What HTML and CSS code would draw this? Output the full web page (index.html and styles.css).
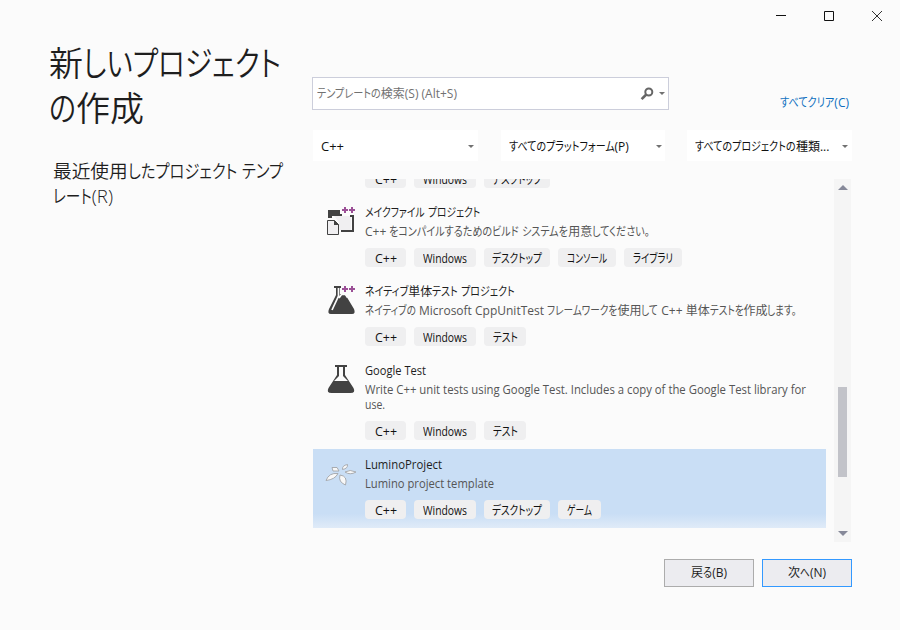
FILE: index.html
```html
<!DOCTYPE html>
<html lang="ja">
<head>
<meta charset="utf-8">
<title>新しいプロジェクトの作成</title>
<link rel="stylesheet" href="styles.css">
</head>
<body>
<div class="window">
  <header class="titlebar">
    <svg class="winctl" viewBox="0 0 48 32"><path d="M24 15.500h10"/></svg>
    <svg class="winctl" viewBox="0 0 48 32"><path d="M24.500 11.500h9v9h-9z"/></svg>
    <svg class="winctl close" viewBox="0 0 48 32"><path d="M24 11l10 10M34 11l-10 10"/></svg>
  </header>
  <div class="columns">
    <aside class="sidebar">
      <h1><span class="line"><span data-w="232">新しいプロジェクト</span></span><span class="line"><span data-w="95">の作成</span></span></h1>
      <h2><span class="line"><span data-w="230">最近使用したプロジェクト テンプ</span></span><span class="line"><span data-w="60">レート(R)</span></span></h2>
    </aside>
    <main class="main">
      <div class="searchrow">
        <div class="search"><span class="hint" data-w="140">テンプレートの検索(S) (Alt+S)</span>
          <svg class="lens" width="14" height="14" viewBox="0 0 14 14"><circle cx="8.800" cy="5" r="3.500"/><path d="M6.300 7.500L1.600 12.200"/></svg>
          <i class="caret"></i></div>
        <a class="clear"><span data-w="69">すべてクリア(C)</span></a>
      </div>
      <div class="filters">
        <div class="select"><span data-w="23">C++</span><i class="caret"></i></div>
        <div class="select"><span data-w="120">すべてのプラットフォーム(P)</span><i class="caret"></i></div>
        <div class="select"><span data-w="134">すべてのプロジェクトの種類...</span><i class="caret"></i></div>
      </div>
      <div class="listwrap">
        <div class="list">
          <div class="tags cut"><b class="t1"><span data-w="22">C++</span></b><b class="t2"><span data-w="44">Windows</span></b><b class="t3"><span data-w="50">デスクトップ</span></b></div>
          <section class="item">
            <svg class="icon" viewBox="0 0 32 32"><path fill="#f0eff1" d="M9 10h17v14H14V16z"/><path fill="#424242" d="M3 4h12v4h2v2H7v2H3zM25 9h4v17H16v-2h11V11h-2z"/><path fill="#f0eff1" stroke="#424242" d="M2.500 14.500h7l4 4v10h-11z"/><path fill="#424242" d="M9 14v5h5z"/><path stroke="#9b4f96" stroke-width="2" d="M17 4h6M20 1v6M24 4h6M27 1v6"/></svg>
            <div class="body"><h3><span data-w="115">メイクファイル プロジェクト</span></h3><p><span data-w="285">C++ をコンパイルするためのビルド システムを用意してください。</span></p>
            <div class="tags"><b class="t1"><span data-w="22">C++</span></b><b class="t2"><span data-w="44">Windows</span></b><b class="t3"><span data-w="50">デスクトップ</span></b><b class="t4"><span data-w="40">コンソール</span></b><b class="t4"><span data-w="40">ライブラリ</span></b></div></div>
          </section>
          <section class="item">
            <svg class="icon" viewBox="0 0 32 32"><path fill="#424242" d="M9 1h7v2h-1v6h5l9 15q2 5-2 5H6q-4 0-2-5l7-14V3H9z"/><path stroke="#fbfbfb" stroke-width="1.700" fill="none" d="M13.500 3v8L7 25M14 13l2.500-3.500h4l2 3"/><path stroke="#9b4f96" stroke-width="2" d="M17 4h6M20 1v6M24 4h6M27 1v6"/></svg>
            <div class="body"><h3><span data-w="150">ネイティブ単体テスト プロジェクト</span></h3><p><span data-w="432">ネイティブの Microsoft CppUnitTest フレームワークを使用して C++ 単体テストを作成します。</span></p>
            <div class="tags"><b class="t1"><span data-w="22">C++</span></b><b class="t2"><span data-w="44">Windows</span></b><b class="t5"><span data-w="25">テスト</span></b></div></div>
          </section>
          <section class="item tall">
            <svg class="icon" viewBox="0 0 32 32"><path fill="#424242" fill-rule="evenodd" d="M10 1h12v2h-2v8l8.500 13q2.500 5-3 5h-19q-5.500 0-3-5L12 11V3h-2zM14 3v9L9 17h14L18 12V3z"/></svg>
            <div class="body"><h3><span data-w="61">Google Test</span></h3><p><span data-w="441">Write C++ unit tests using Google Test. Includes a copy of the Google Test library for</span><br><span data-w="20">use.</span></p>
            <div class="tags"><b class="t1"><span data-w="22">C++</span></b><b class="t2"><span data-w="44">Windows</span></b><b class="t5"><span data-w="25">テスト</span></b></div></div>
          </section>
          <section class="item selected">
            <svg class="icon" viewBox="0 0 32 32"><g fill="#f8f8f8" stroke="#a3a5a8" stroke-width=".9"><path d="M1 22.500q3-8 12-7q-3 6-12 7z"/><path d="M7 9.500h5l2 3.500H8z"/><path d="M17.500 11.500q-.500-4 5-5q.500 4-5 5z"/><path d="M20 14q5-3 11 0q-6 3.500-11 0z"/><path d="M15 17q8 1 5.500 10q-7.500-3-5.500-10z"/></g></svg>
            <div class="body"><h3><span data-w="77">LuminoProject</span></h3><p><span data-w="129">Lumino project template</span></p>
            <div class="tags"><b class="t1"><span data-w="22">C++</span></b><b class="t2"><span data-w="44">Windows</span></b><b class="t3"><span data-w="50">デスクトップ</span></b><b class="t6"><span data-w="25">ゲーム</span></b></div></div>
          </section>
        </div>
        <div class="scrollbar"><i class="up"></i><i class="thumb"></i><i class="down"></i></div>
      </div>
      <footer class="actions"><button><span data-w="36">戻る(B)</span></button><button class="primary"><span data-w="38">次へ(N)</span></button></footer>
    </main>
  </div>
</div>
<script src="fit.js"></script>
</body>
</html>
```
FILE: styles.css
```css
* { box-sizing: border-box; }
body { margin: 0; background: #fbfbfb; color: #1e1e1e; font: 12px/16px "Open Sans", "Noto Sans CJK JP", sans-serif; font-feature-settings: "palt"; }
.window { width: 900px; height: 630px; overflow: hidden; }
.titlebar { height: 32px; display: flex; justify-content: flex-end; padding-right: 4px; }
.winctl { width: 48px; height: 32px; fill: none; stroke: #111; stroke-width: 1; }
.winctl.close { stroke: #333; }
.columns { display: flex; }
.sidebar { width: 312px; padding: 9px 0 0 49px; }
h1, h2, h3, p { margin: 0; font-weight: 400; }
.line { display: block; }
[data-w] { display: inline-block; white-space: pre; flex: none; }
.run { display: inline-block; transform-origin: 0 50%; white-space: pre; }
h1 { font-size: 34px; line-height: 45px; font-weight: 350; }
h2 { font-size: 18.7px; line-height: 26px; padding: 27px 0 0 4px; font-weight: 350; }
h2 .line + .line { margin-top: -1px; }
.main { width: 540px; padding-top: 45px; }
.searchrow { display: flex; height: 33px; justify-content: space-between; }
.search { width: 357px; height: 33px; display: flex; align-items: center; border: 1px solid #cccedb; background: #fff; padding: 0 3px 0 4px; color: #717171; }
.lens { margin-left: auto; fill: none; stroke: #666; stroke-width: 2; }
.lens path { stroke-width: 2.6; }
.caret { width: 0; height: 0; border: 3px solid transparent; border-top-color: #717171; border-bottom: 0; flex: none; }
.search .caret { margin-left: 5px; }
.clear { color: #0e70c0; padding: 18px 3px 0 0; }
.filters { display: flex; gap: 22px; margin: 20px 0 0 1px; }
.select { width: 165px; height: 31px; display: flex; align-items: center; justify-content: space-between; background: #fff; padding: 2px 4px 0 8px; color: #111; }
.select .caret { margin-bottom: 1px; }
.select:nth-child(2) { margin-left: 1px; }
.select:nth-child(2) .caret { margin-right: -1px; }
.listwrap { height: 363px; margin: 18px 1px 0 1px; display: flex; justify-content: space-between; }
.list { width: 513px; height: 349px; overflow: hidden; }
.scrollbar { width: 17px; height: 363px; background: #f5f5f5; display: flex; flex-direction: column; align-items: center; padding: 6px 0; }
.up, .down { width: 0; height: 0; border: 5px solid transparent; }
.up { border-top: 0; border-bottom-color: #868999; }
.down { border-bottom: 0; border-top-color: #868999; margin-top: auto; }
.thumb { width: 9px; height: 90px; background: #c2c3c9; margin-top: 197px; }
.tags { display: flex; gap: 8px; }
.tags b { height: 19px; display: flex; align-items: center; justify-content: center; border-radius: 4px; background: #efeff0; color: #111; font-weight: 400; padding-top: 2px; }
.cut { height: 9px; margin-left: 52px; align-items: flex-end; }
.t1 { width: 41px; }
.t2 { width: 62px; }
.t3 { width: 66px; }
.t4 { width: 58px; }
.t5 { width: 42px; }
.t6 { width: 43px; }
.item { height: 79px; display: flex; padding-left: 12px; }
.cut + .item { margin-top: 9px; }
.item.tall { height: 94px; }
.icon { width: 32px; height: 32px; margin: 9px 8px 0 0; flex: none; }
.body { width: 450px; padding-top: 8px; }
h3 { font-size: 12px; line-height: 16px; height: 16px; }
p { color: #555; line-height: 15px; margin-top: 3px; }
.body .tags { margin-top: 9px; }
.selected { background: linear-gradient(#c9def5 0, #c9def5 82%, #e0ebf8); }
.actions { display: flex; justify-content: flex-end; gap: 8px; margin-top: 17px; }
button { width: 90px; height: 28px; border: 1px solid #acacac; background: #ececf0; color: #1e1e1e; font: inherit; padding: 0; }
button.primary { border-color: #3399ff; }
```
FILE: fit.js
```js
document.querySelectorAll('[data-w]').forEach(function (el) {
  var target = +el.dataset.w;
  var parts = el.textContent.match(/[\u3040-\u30ff。]+|[^\u3040-\u30ff。]+/g);
  el.textContent = '';
  var runs = parts.map(function (t) {
    var s = document.createElement('span');
    s.className = 'run';
    s.textContent = t;
    el.appendChild(s);
    return { s: s, kana: /[\u3040-\u30ff]/.test(t), w: s.getBoundingClientRect().width };
  });
  var kana = 0, other = 0;
  runs.forEach(function (r) { if (r.kana) kana += r.w; else other += r.w; });
  var k = kana ? (target - other) / kana : 1;
  var o = kana ? 1 : target / other;
  runs.forEach(function (r) {
    var f = r.kana ? k : o;
    r.s.style.width = r.w * f + 'px';
    r.s.style.transform = 'scaleX(' + f + ')';
  });
});
```
